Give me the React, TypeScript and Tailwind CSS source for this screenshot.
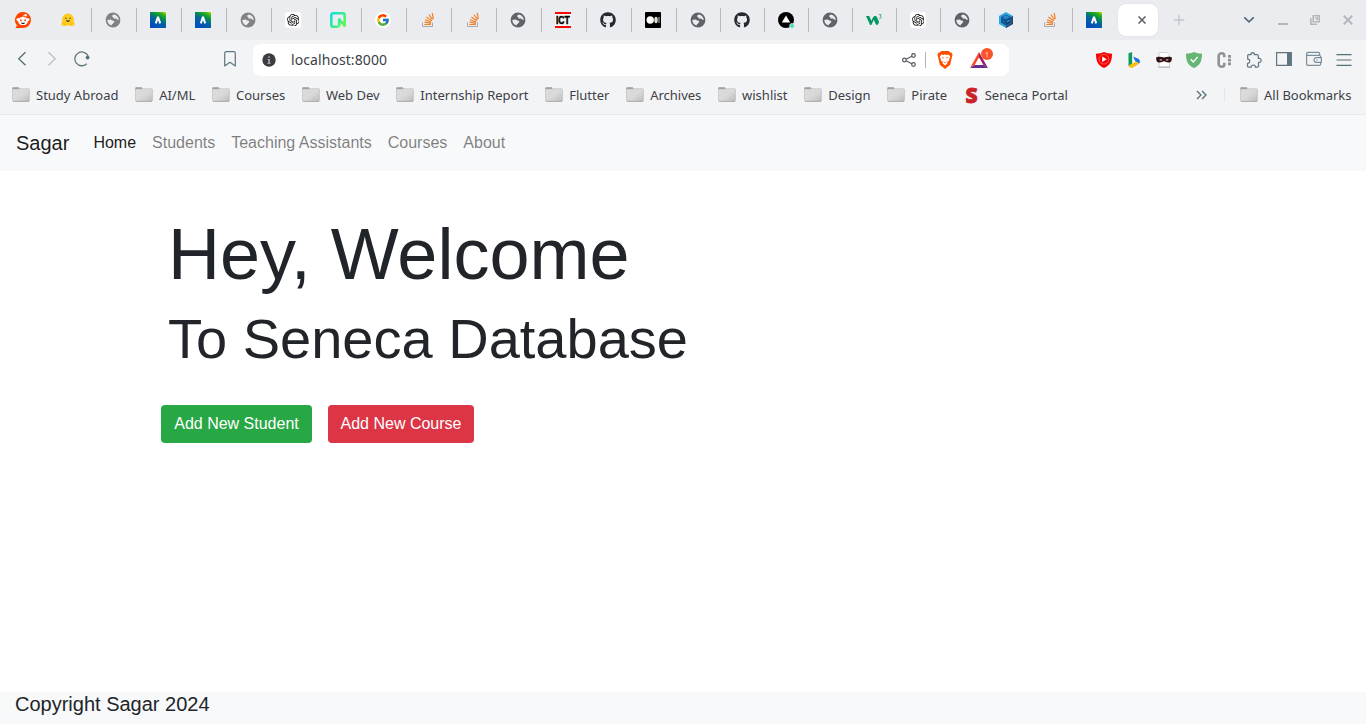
import React from "react";
import { FcGoogle } from "react-icons/fc";
import { SiOpenai } from "react-icons/si";
import { FaGithub } from "react-icons/fa";

const Reddit = () => (
  <svg width="16" height="16" viewBox="0 0 16 16">
    <path d="M8 0a8 8 0 0 1 0 16H1.2c-.6 0-.8-.5-.4-.9l1.5-1.5A8 8 0 0 1 8 0Z" fill="#ff4500" />
    <circle cx="3" cy="7.4" r="1.5" fill="#fff" />
    <circle cx="13" cy="7.4" r="1.5" fill="#fff" />
    <ellipse cx="8" cy="9" rx="5" ry="4.1" fill="#fff" />
    <circle cx="10.7" cy="3.3" r="1.2" fill="#fff" />
    <path d="M8 5c0-1.4.9-2 2.4-1.8" stroke="#fff" strokeWidth=".6" fill="none" />
    <ellipse cx="5.9" cy="8.3" rx=".9" ry="1.1" fill="#ff4500" />
    <ellipse cx="10.1" cy="8.3" rx=".9" ry="1.1" fill="#ff4500" />
    <path d="M6 10.7h4c-.3 1-1 1.4-2 1.4s-1.7-.4-2-1.4Z" fill="#222" />
  </svg>
);

const Hug = () => (
  <svg width="16" height="16" viewBox="0 0 16 16">
    <path d="M8 1.4a5.9 5.9 0 0 1 5.9 5.9c0 1.1-.1 1.9-.4 2.6.9.6 1.5 1.4 1.1 2.2.2.8-.7 1.9-2.7 1.9-1.4.3-2.5-.1-3.9-.9-1.4.8-2.5 1.2-3.9.9-2 0-2.9-1.1-2.7-1.9-.4-.8.2-1.6 1.1-2.2-.3-.7-.4-1.5-.4-2.6A5.9 5.9 0 0 1 8 1.4Z" fill="#ffcb1c" />
    <path d="M2.3 10.4c1.5.1 3 1.2 3.2 2.6M13.7 10.4c-1.5.1-3 1.2-3.2 2.6" stroke="#ffab10" strokeWidth=".7" fill="none" />
    <circle cx="5.9" cy="6.2" r=".7" fill="#3a3b45" />
    <circle cx="10.1" cy="6.2" r=".7" fill="#3a3b45" />
    <path d="M6 8c1.3.6 2.7.6 4 0-.1 1.3-.9 2-2 2s-1.9-.7-2-2Z" fill="#4a3b35" />
  </svg>
);

const Globe = ({ light = false }: { light?: boolean }) => (
  <svg width="16" height="16" viewBox="0 0 16 16">
    <circle cx="8" cy="8" r="7.4" fill={light ? "#828282" : "#5f6368"} />
    <path
      d="M9.2 2.5c-1 .2-2.300.9-2.200 1.800.1.700.9.700 1.500.7-.5.600-.2 1.100.3 1.400.9.400 1.600-.1 2.300.2.600.3.700 1 1.500 1.200.5.100.9 0 1.200-.1C13.500 5.200 11.800 3.100 9.200 2.500Z M2.300 8c0 2.600 1.700 4.900 4.400 5.500l.2-1.200c1.100 0 1.300-.8 1.300-1.500.6-.2 1.200-.4 1.100-1.100-.1-.9-1.100-.8-2-1.100-.7-.3-.8-.9-1.800-1Z"
      fill="#ebecf0"
    />
  </svg>
);

const Peak = () => (
  <svg width="16" height="16" viewBox="0 0 16 16">
    <defs>
      <linearGradient id="peak" x1="1" y1="0" x2=".45" y2="1">
        <stop offset="0" stopColor="#d6e600" />
        <stop offset=".16" stopColor="#45b51c" />
        <stop offset=".36" stopColor="#08983a" />
        <stop offset=".62" stopColor="#0562a0" />
        <stop offset="1" stopColor="#0350bd" />
      </linearGradient>
    </defs>
    <path d="M0 0h16v16H0Z" fill="url(#peak)" />
    <path d="M5.8 11.400 7.800 5.500h.4l2 5.900" stroke="#fff" strokeWidth="2" fill="none" />
  </svg>
);

const Gpt = () => (
  <span className="flex size-4 items-center justify-center rounded-[3px] bg-white">
    <SiOpenai size={12.5} className="text-[#111]" />
  </span>
);

const Neon = () => (
  <svg width="16" height="16" viewBox="0 0 16 16">
    <defs>
      <linearGradient id="neon" x1="0" y1="0" x2="1" y2=".8">
        <stop offset="0" stopColor="#15dbd8" />
        <stop offset=".5" stopColor="#30e99f" />
        <stop offset="1" stopColor="#62f755" />
      </linearGradient>
    </defs>
    <path d="M8.5 14.7H3A1.700 1.700 0 0 1 1.300 13V3A1.700 1.700 0 0 1 3 1.300h10A1.700 1.700 0 0 1 14.700 3v10.800L9.200 7.400v7.300" fill="none" stroke="url(#neon)" strokeWidth="2.600" strokeLinejoin="round" />
  </svg>
);

const Google = () => (
  <span className="flex size-4 items-center justify-center rounded-full bg-white">
    <FcGoogle size={14} />
  </span>
);

const Stack = () => (
  <svg width="16" height="16" viewBox="0 0 16 16">
    <path d="M2.5 10.5v4h10v-4" fill="none" stroke="#a5abb0" strokeWidth="1" />
    <path d="M4.300 12.500h6.600M4.500 10.200l6.500 1.100M5 7.800l6.200 2.300M6.400 5l5.400 3.800M8.900 2.500l3.600 5.200M12.200.9l1.100 6.100" stroke="#f48024" strokeWidth="1.200" fill="none" />
  </svg>
);

const Ict = () => (
  <span className="flex h-4 w-4 items-center justify-center overflow-hidden border-y-2 border-[#f5090b] bg-[#f4f4f4] font-['Liberation_Sans',Arial,sans-serif] text-[11px] leading-none font-bold text-black">
    <span className="scale-x-[0.78] [-webkit-text-stroke:0.5px_#000]">ICT</span>
  </span>
);

const Github = () => <FaGithub size={16} className="text-[#24292e]" />;

const Medium = () => (
  <svg width="16" height="16" viewBox="0 0 16 16">
    <rect width="16" height="16" rx="1" fill="#000" />
    <circle cx="5.2" cy="8" r="3.7" fill="#fff" />
    <ellipse cx="11" cy="8" rx="1.7" ry="3.3" fill="#ddd" />
    <rect x="13.5" y="5" width="1" height="6" rx=".4" fill="#bbb" />
  </svg>
);

const Deploy = () => (
  <svg width="16" height="16" viewBox="0 0 16 16" className="overflow-visible">
    <circle cx="8" cy="8" r="8" fill="#000" />
    <path d="m8 3.600 4.200 7H3.800Z" fill="#fff" />
    <circle cx="14" cy="13.900" r="2.400" fill="#45dfb8" stroke="#ebecf0" strokeWidth=".7" />
  </svg>
);

const W3 = () => (
  <svg width="16" height="16" viewBox="0 0 16 16" fill="none">
    <path d="M0 4h3.200l2.200 4.700L6.700 6c.7-1.400 1.500-2 2.600-2 .9 0 1.300.4 1.700 1.300l2.100 4.600-1.300 2.900H10L7.800 7.800 5.400 12.900H4.100Z" fill="#059862" />
    <path d="M12.800 2.600h2.400L14 4.200c.9 0 1.400.5 1.400 1.200 0 1-1.400 1.300-2.400.7" stroke="#48aa88" strokeWidth=".9" />
  </svg>
);

const Hexagon = () => (
  <svg width="16" height="16" viewBox="0 0 16 16">
    <path d="m8 0 7 4v8l-7 4-7-4V4Z" fill="#2fa6e4" />
    <path d="m15 4v8l-7 4v-2l5.200-3V5Z" fill="#2f406a" />
    <path d="m8 2.400 5 2.700v5.700l-5 2.900-5-2.900V5.100Z" fill="#0f5a96" />
    <path d="m8 3.200 3.800 2L8 7.300 4.200 5.200Z" fill="#2b86c8" />
    <path d="M8 8.200 12.400 6v4.500L8 13Z" fill="#123f70" />
    <path d="m8.800 9.200 2.800-1.500v1.200l-2.800 1.500Z" fill="#2fa8ea" />
  </svg>
);

type Tab = { icon: React.ReactNode; cell: string };
const first = "w-[47px] pl-[15px]";
const wide = "w-[45px] pl-[13px] border-r";
const slim = "w-[44px] pl-[13px] border-r";
const tabs: Tab[] = [
  { icon: <Reddit />, cell: first },
  { icon: <Hug />, cell: wide },
  { icon: <Globe light />, cell: wide },
  { icon: <Peak />, cell: wide },
  { icon: <Peak />, cell: wide },
  { icon: <Globe light />, cell: wide },
  { icon: <Gpt />, cell: wide },
  { icon: <Neon />, cell: wide },
  { icon: <Google />, cell: wide },
  { icon: <Stack />, cell: wide },
  { icon: <Stack />, cell: wide },
  { icon: <Globe />, cell: wide },
  { icon: <Ict />, cell: wide },
  { icon: <Github />, cell: wide },
  { icon: <Medium />, cell: wide },
  { icon: <Globe />, cell: slim },
  { icon: <Github />, cell: slim },
  { icon: <Deploy />, cell: slim },
  { icon: <Globe />, cell: slim },
  { icon: <W3 />, cell: slim },
  { icon: <Gpt />, cell: slim },
  { icon: <Globe />, cell: slim },
  { icon: <Hexagon />, cell: slim },
  { icon: <Stack />, cell: slim },
  { icon: <Peak />, cell: "w-[45px] pl-[13px]" },
];

const TabStrip = () => (
  <div className="flex h-10 items-center bg-[#ebecf0]">
    {tabs.map((t, i) => (
      <div key={i} className={`flex h-6 shrink-0 items-center border-[#b9babc] ${t.cell}`}>
        {t.icon}
      </div>
    ))}
    <div className="flex h-8 w-10 shrink-0 items-center rounded-lg bg-white pl-5 shadow-[0_0_2px_rgba(0,0,0,0.08)]">
      <svg width="8" height="8" viewBox="0 0 8 8" stroke="#5b5e66" strokeWidth="1.5">
        <path d="m.5.5 7 7m0-7-7 7" />
      </svg>
    </div>
    <svg className="ml-[15px] shrink-0" width="12" height="12" viewBox="0 0 12 12" stroke="#c3c6ca" strokeWidth="1.4">
      <path d="M6 .7v10.6M.7 6h10.6" />
    </svg>
    <svg className="ml-[58px] shrink-0" width="12" height="8" viewBox="0 0 12 8" fill="none" stroke="#566b78" strokeWidth="1.7">
      <path d="m1.3 1.3 4.7 4.6 4.7-4.6" />
    </svg>
    <svg className="mt-0.5 ml-[23px] shrink-0" width="10" height="10" viewBox="0 0 10 10">
      <path d="M0 7h10v2H0Z" fill="#b6b7bb" />
    </svg>
    <svg className="ml-[22px] shrink-0" width="10" height="10" viewBox="0 0 10 10" fill="none" stroke="#b6b7bb" strokeWidth="1.6">
      <path d="M3.2.8h6v6h-6ZM.8 3v6.200H7M5.200 3h2v2" />
    </svg>
    <svg className="ml-[23px] shrink-0" width="10" height="10" viewBox="0 0 10 10" stroke="#b6b7bb" strokeWidth="2">
      <path d="m.8.8 8.4 8.4m0-8.4L.8 9.2" />
    </svg>
  </div>
);

const AddressBox = () => (
  <div className="ml-4 flex h-8 w-[756px] shrink-0 items-center rounded-[8px] bg-white pl-[9px]">
    <svg width="14" height="14" viewBox="0 0 14 14">
      <circle cx="7" cy="7" r="6.7" fill="#3b3d41" />
      <path d="M6.300 3.200h1.500v1.500H6.300ZM5.700 6h2.100v3.700h.8v1H5.500v-1h.9V7h-.7Z" fill="#b9babc" />
    </svg>
    <span className="ml-[15px] w-[611px] text-[14px] leading-5 tracking-[0.08px] text-[#3d4047]">localhost:8000</span>
    <svg className="shrink-0" width="14" height="14" viewBox="0 0 14 14" fill="none" stroke="#54575c" strokeWidth="1.2">
      <circle cx="2.400" cy="7" r="1.800" />
      <circle cx="11.500" cy="2.500" r="1.800" />
      <circle cx="11.500" cy="11.500" r="1.800" />
      <path d="m4 6.200 5.900-2.900M4 7.800l5.900 2.900" />
    </svg>
    <span className="ml-[9px] h-4 w-px shrink-0 bg-[#b0b2b6]" />
    <svg className="ml-[11px] shrink-0" width="16" height="18" viewBox="0 0 16 18">
      <path d="M4.200 0h7.600l1.500 1.400 1.100.1 1.200 2.200-.5 1.500-1.900 8.500L8 18l-5.200-4.300L.9 5.200.4 3.700l1.200-2.200 1.100-.1Z" fill="#ff5000" />
      <path d="m4.400 3.500 2 .4L8 3.500l1.600.4 2-.4 1.700 2.300-1.200 2.200.2 1.500-2.300 1.500.6 1.200L8 14.400l-2.600-2.200.6-1.200-2.300-1.500.2-1.500-1.200-2.200Z" fill="#fff" />
      <path d="m4.700 6.300 1.800.3.300 1M11.300 6.300l-1.800.3-.3 1M6.600 10.800l1.400.7 1.400-.7" fill="none" stroke="#ff5f1a" strokeWidth=".7" />
    </svg>
    <div className="relative ml-[17px] h-4 w-[23px] shrink-0">
      <svg width="18" height="16" viewBox="0 0 18 16">
        <path d="M9 0 0 16l4.700-3.100L9 5.300Z" fill="#ff4724" />
        <path d="m9 0 9 16-4.600-3.100L9 5.300Z" fill="#9e1f63" />
        <path d="m0 16 4.700-3.100h8.700L18 16Z" fill="#662d91" />
      </svg>
      <span className="absolute -top-1 left-[11px] flex size-3 items-center justify-center rounded-full bg-[#fb542b] text-[7px] leading-none text-white/80">1</span>
    </div>
  </div>
);

const Toolbar = () => (
  <div className="flex h-10 items-center text-[#5f7580]">
    <svg className="-mt-0.5 ml-[17px] shrink-0" width="10" height="16" viewBox="0 0 10 16" fill="none" stroke="#566d78" strokeWidth="1.3">
      <path d="M8.500 1.300 1.700 7.800l6.800 6.500" />
    </svg>
    <svg className="-mt-0.5 ml-5 shrink-0" width="10" height="16" viewBox="0 0 10 16" fill="none" stroke="#b8c1c5" strokeWidth="1.3">
      <path d="m1.500 1.300 6.800 6.500-6.800 6.500" />
    </svg>
    <svg className="-mt-0.5 ml-[17px] shrink-0" width="17" height="16" viewBox="0 0 17 16" fill="none" stroke="#5f7580" strokeWidth="1.3">
      <path d="M12.700 12.700A6.900 6.900 0 1 1 14.100 5.100" />
      <circle cx="13.600" cy="6.600" r="1.900" fill="#566d78" stroke="none" />
    </svg>
    <svg className="-mt-0.5 ml-[133px] shrink-0" width="12" height="16" viewBox="0 0 12 16" fill="none" stroke="#5f7580" strokeWidth="1.2" strokeLinejoin="round">
      <path d="M.7 14.900V2.200C.7 1.200 1.200.7 2.200.7h7.600c1 0 1.500.5 1.500 1.500v12.700L6 11.300Z" />
    </svg>
    <div className="w-px shrink-0" />
    <AddressBox />
    <svg className="ml-[87px] shrink-0" width="16" height="16" viewBox="0 0 16 16">
      <path d="M8 0c2.400 1.200 5 1.700 8 1.700 0 7-1.600 11.500-8 14.300C1.600 13.200 0 8.700 0 1.700 3 1.700 5.600 1.200 8 0Z" fill="#f70000" />
      <circle cx="8" cy="7.200" r="4.900" stroke="#ff9c9c" strokeWidth=".6" fill="none" />
      <path d="m6.200 4.500 4.600 2.700-4.600 2.700Z" fill="#fff" />
    </svg>
    <svg className="ml-4 shrink-0" width="13" height="16" viewBox="0 0 13 16">
      <path d="M.5 1.200 4.100 0v11.700l-3.600 2.600Z" fill="#0f9b55" />
      <path d="m5.200 4.600 5.500 2.400c1.400.9 1.700 3.300.4 4.600L7.100 8.900Z" fill="#1a73e8" />
      <path d="m.5 13.800 7.300-4 3.500 1.700-6.800 4.300c-2 .3-3.300-.5-4-2Z" fill="#fbbc04" />
    </svg>
    <svg className="ml-[15px] shrink-0" width="16" height="16" viewBox="0 0 16 16">
      <path d="M3 .5h8l2.500 2.500v12H3Z" fill="#fff" stroke="#c9c9cb" strokeWidth=".8" />
      <path d="M2 15.200h12" stroke="#b5b5b7" strokeWidth="1" />
      <path d="M.3 5.300c3-.8 5-.4 7.700.2 2.700-.6 4.700-1 7.700-.2.4 3-.4 4.900-3 5.200-2 .2-3.300-1.300-4.700-1.300s-2.700 1.500-4.700 1.300c-2.600-.3-3.400-2.200-3-5.200Z" fill="#301015" />
      <path d="M3.200 7.800c1.100-.9 2.300-.7 3.100.2-1 .8-2.200.8-3.100-.2Zm6.500.2c.8-.9 2-1.100 3.100-.2-.9 1-2.100 1-3.100.2Z" fill="#ddd" />
    </svg>
    <svg className="ml-[14px] shrink-0" width="16" height="16" viewBox="0 0 16 16">
      <path d="M8 0c2.400 1.200 5 1.700 8 1.700 0 7-1.600 11.500-8 14.300C1.600 13.200 0 8.700 0 1.700 3 1.700 5.600 1.200 8 0Z" fill="#66b574" />
      <path d="m4.700 7.300 2.600 2.600 4.400-5" fill="none" stroke="#fff" strokeWidth="1.4" />
    </svg>
    <svg className="ml-[15px] shrink-0" width="15" height="16" viewBox="0 0 15 16" fill="none">
      <path d="M7.300 5.200V3.800c0-1.500-.9-2.500-2.500-2.500S1.700 2.300 1.700 3.800v8.400c0 1.500 1.500 2.500 3.100 2.500s2.500-1 2.500-2.500v-1.400" stroke="#929292" strokeWidth="2.600" />
      <path d="M11 3h3v2.700h-3ZM11 6.800h3v2.700h-3ZM11 10.600h3v2.700h-3Z" fill="#929292" />
    </svg>
    <svg className="ml-[14px] shrink-0" width="16" height="16" viewBox="0 0 16 16" fill="none" stroke="#5f7580" strokeWidth="1.2" strokeLinejoin="round">
      <path d="M1.700 3.600c0-.6.3-.9.900-.9h2.600C4.700 1.500 5.500.7 6.700.7s2 .8 1.600 2H11c.9 0 1.300.4 1.300 1.300v2.500c1.700-.4 2.900.5 2.900 1.900s-1.200 2.200-2.700 1.900v3.600c0 .8-.4 1.200-1.200 1.200H9.300c.2-1.400-.8-2.100-2-2.100s-2.200.8-2 2.100H2.700c-.8 0-1.200-.4-1.200-1.200v-2.600c1.500.1 2.300-.9 2.300-2.100s-.8-2.100-2.100-2Z" />
    </svg>
    <svg className="-mt-0.5 ml-[14px] shrink-0" width="16" height="16" viewBox="0 0 16 16">
      <path d="M.6 1.600h14.600v12.700H.6Z" fill="none" stroke="#5f7580" strokeWidth="1.2" />
      <path d="M11 1h4.700v13.900H11Z" fill="#5f7580" />
    </svg>
    <svg className="-mt-0.5 ml-[14px] shrink-0" width="16" height="16" viewBox="0 0 16 16" fill="none" stroke="#7c8e97" strokeWidth="1.2">
      <path d="M13.600 4.500V2.600c0-.8-.4-1.200-1.200-1.200H2C1.100 1.400.6 1.900.6 2.700S1.100 4.300 2 4.300h11c1.100 0 1.600.5 1.600 1.500v7.200c0 .9-.5 1.300-1.400 1.300H2c-.9 0-1.400-.4-1.400-1.300V2.700" />
      <path d="M15.400 6.700h-5.100c-3 0-3 4.600 0 4.600h5.100Z" fill="#f3f4f6" />
      <path d="M10.300 9h1.400" />
    </svg>
    <svg className="-mt-px ml-[14px] shrink-0" width="16" height="14" viewBox="0 0 16 14" stroke="#566d78" strokeWidth="1.2">
      <path d="M.5 1.700h15M.5 7h15M.5 12.300h15" />
    </svg>
  </div>
);

const Folder = () => (
  <svg width="18" height="15" viewBox="0 0 18 15" className="shrink-0">
    <defs>
      <linearGradient id="folder" x1="0" y1="0" x2="1" y2="1">
        <stop offset="0" stopColor="#dcdcdc" />
        <stop offset=".5" stopColor="#d9d9d9" />
        <stop offset="1" stopColor="#bdbdbd" />
      </linearGradient>
    </defs>
    <path d="M.3 1.200C.3.500.6.200 1.300.200h5c.6 0 .9.300 1.100 1l.2.900H8v1.400H.3Z" fill="#999" />
    <path d="M.5 2.900c0-.6.3-.8.800-.8h4.800c.5 0 .7-.1 1-.4h9.300c.7 0 1.100.4 1.100 1.100v10.400c0 .8-.4 1.200-1.200 1.200H1.700c-.8 0-1.200-.4-1.200-1.200Z" fill="url(#folder)" stroke="#bcbcbc" strokeWidth=".6" />
    <path d="M1 14.400h16" stroke="#a2a2a2" strokeWidth=".7" />
  </svg>
);

const bookmarks = ["Study Abroad", "AI/ML", "Courses", "Web Dev", "Internship Report", "Flutter", "Archives", "wishlist", "Design", "Pirate"];

const BookmarkBar = () => (
  <div className="flex h-[34px] items-center pl-3 text-[13px] leading-[18px] whitespace-nowrap text-[#3d4047]">
    {bookmarks.map((b) => (
      <div key={b} className="mr-[16.7px] flex shrink-0 items-center gap-1.5 pb-[5px]">
        <Folder />
        <span>{b}</span>
      </div>
    ))}
    <div className="flex shrink-0 items-center pb-[5px] pl-px">
      <span className="flex h-4 w-[14px] items-center justify-center font-['Open_Sans',sans-serif] text-[21px] leading-4 font-extrabold text-[#cb2228] [-webkit-text-stroke:0.8px_#cb2228]">S</span>
      <span className="ml-[6px]">Seneca Portal</span>
    </div>
    <div className="ml-auto flex shrink-0 items-center pr-[14.5px] pb-[5px]">
      <svg className="mr-[17px]" width="11" height="10" viewBox="0 0 11 10" fill="none" stroke="#566d78" strokeWidth="1.3">
        <path d="m1 1 4 4-4 4M6 1l4 4-4 4" />
      </svg>
      <span className="mr-[15px] h-3.5 w-px bg-[#e3e5e8]" />
      <Folder />
      <span className="ml-1.5">All Bookmarks</span>
    </div>
  </div>
);

const links = ["Students", "Teaching Assistants", "Courses", "About"];

export default function App() {
  return (
    <div className="flex h-[724px] w-[1366px] flex-col overflow-hidden bg-white font-['Liberation_Sans',Arial,sans-serif] text-[#212529]">
      <header className="h-[115px] shrink-0 border-b border-[#e8e9ec] bg-[#f3f4f6] font-['Noto_Sans',sans-serif]">
        <TabStrip />
        <Toolbar />
        <BookmarkBar />
      </header>
      <nav className="flex h-14 shrink-0 items-center bg-[#f8f9fa] pl-4 text-[16px] leading-6">
        <a className="mr-6 text-[20px] leading-[30px] text-black/90">Sagar</a>
        <div className="flex gap-4 pb-px">
          <a className="text-black/90">Home</a>
          {links.map((l) => (
            <a key={l} className="text-black/50">{l}</a>
          ))}
        </div>
      </nav>
      <main className="flex-1 pt-10 pl-[161px]">
        <h1 className="mb-2 pl-[7px] text-[72px] leading-[1.2] font-light">Hey, Welcome</h1>
        <h2 className="pl-[7px] text-[56px] leading-[1.2] font-light">To Seneca Database</h2>
        <div className="mt-8 flex gap-4">
          <button className="h-[38px] w-[151px] rounded bg-[#28a745] text-[16px] leading-6 text-white">Add New Student</button>
          <button className="h-[38px] w-[146px] rounded bg-[#dc3545] text-[16px] leading-6 text-white">Add New Course</button>
        </div>
      </main>
      <footer className="h-8 shrink-0 bg-[#f8f9fa] pl-[15px] text-[20px] leading-6">Copyright Sagar 2024</footer>
    </div>
  );
}
